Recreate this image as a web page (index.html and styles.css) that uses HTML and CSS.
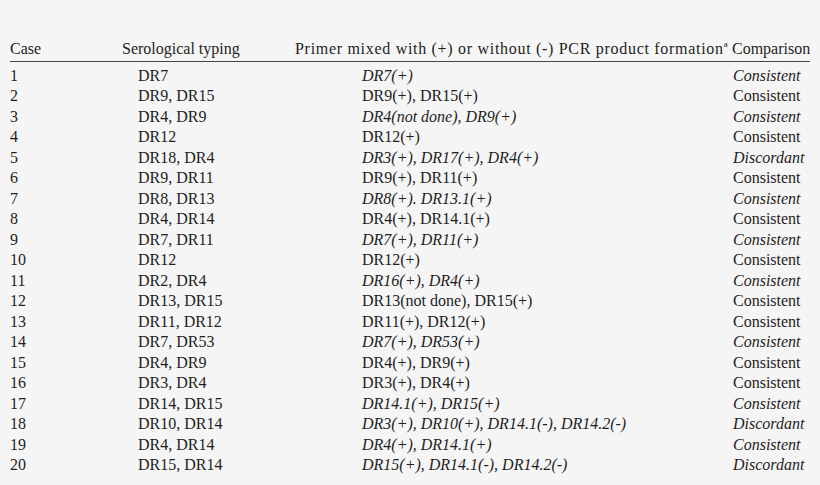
FILE: index.html
```html
<!DOCTYPE html>
<html>
<head>
<meta charset="utf-8">
<link rel="stylesheet" href="styles.css">
</head>
<body>
<div class="table">
  <div class="row head">
    <div class="c1">Case</div>
    <div class="c2">Serological typing</div>
    <div class="c3">Primer mixed with (+) or without (-) PCR product formation<sup>a</sup></div>
    <div class="c4">Comparison</div>
  </div>
  <div class="body">
    <div class="row it"><div class="c1">1</div><div class="c2">DR7</div><div class="c3">DR7(+)</div><div class="c4">Consistent</div></div>
    <div class="row"><div class="c1">2</div><div class="c2">DR9, DR15</div><div class="c3">DR9(+), DR15(+)</div><div class="c4">Consistent</div></div>
    <div class="row it"><div class="c1">3</div><div class="c2">DR4, DR9</div><div class="c3">DR4(not done), DR9(+)</div><div class="c4">Consistent</div></div>
    <div class="row"><div class="c1">4</div><div class="c2">DR12</div><div class="c3">DR12(+)</div><div class="c4">Consistent</div></div>
    <div class="row it"><div class="c1">5</div><div class="c2">DR18, DR4</div><div class="c3">DR3(+), DR17(+), DR4(+)</div><div class="c4">Discordant</div></div>
    <div class="row"><div class="c1">6</div><div class="c2">DR9, DR11</div><div class="c3">DR9(+), DR11(+)</div><div class="c4">Consistent</div></div>
    <div class="row it"><div class="c1">7</div><div class="c2">DR8, DR13</div><div class="c3">DR8(+). DR13.1(+)</div><div class="c4">Consistent</div></div>
    <div class="row"><div class="c1">8</div><div class="c2">DR4, DR14</div><div class="c3">DR4(+), DR14.1(+)</div><div class="c4">Consistent</div></div>
    <div class="row it"><div class="c1">9</div><div class="c2">DR7, DR11</div><div class="c3">DR7(+), DR11(+)</div><div class="c4">Consistent</div></div>
    <div class="row"><div class="c1">10</div><div class="c2">DR12</div><div class="c3">DR12(+)</div><div class="c4">Consistent</div></div>
    <div class="row it"><div class="c1">11</div><div class="c2">DR2, DR4</div><div class="c3">DR16(+), DR4(+)</div><div class="c4">Consistent</div></div>
    <div class="row"><div class="c1">12</div><div class="c2">DR13, DR15</div><div class="c3">DR13(not done), DR15(+)</div><div class="c4">Consistent</div></div>
    <div class="row"><div class="c1">13</div><div class="c2">DR11, DR12</div><div class="c3">DR11(+), DR12(+)</div><div class="c4">Consistent</div></div>
    <div class="row it"><div class="c1">14</div><div class="c2">DR7, DR53</div><div class="c3">DR7(+), DR53(+)</div><div class="c4">Consistent</div></div>
    <div class="row"><div class="c1">15</div><div class="c2">DR4, DR9</div><div class="c3">DR4(+), DR9(+)</div><div class="c4">Consistent</div></div>
    <div class="row"><div class="c1">16</div><div class="c2">DR3, DR4</div><div class="c3">DR3(+), DR4(+)</div><div class="c4">Consistent</div></div>
    <div class="row it"><div class="c1">17</div><div class="c2">DR14, DR15</div><div class="c3">DR14.1(+), DR15(+)</div><div class="c4">Consistent</div></div>
    <div class="row it"><div class="c1">18</div><div class="c2">DR10, DR14</div><div class="c3">DR3(+), DR10(+), DR14.1(-), DR14.2(-)</div><div class="c4">Discordant</div></div>
    <div class="row it"><div class="c1">19</div><div class="c2">DR4, DR14</div><div class="c3">DR4(+), DR14.1(+)</div><div class="c4">Consistent</div></div>
    <div class="row it"><div class="c1">20</div><div class="c2">DR15, DR14</div><div class="c3">DR15(+), DR14.1(-), DR14.2(-)</div><div class="c4">Discordant</div></div>
  </div>
</div>
</body>
</html>
```
FILE: styles.css
```css
html, body {
  margin: 0;
  padding: 0;
  background: #f5f5f5;
}
body {
  width: 820px;
  height: 485px;
  overflow: hidden;
  font-family: "Liberation Serif", "Times New Roman", serif;
  font-size: 16px;
  color: #1e1e1e;
}
.table {
  padding: 39px 10px 0 10px;
  width: 800px;
}
.row {
  display: grid;
  grid-template-columns: 112px 173px 437px 78px;
  line-height: 20.5px;
  white-space: nowrap;
}
.head {
  padding-bottom: 1px;
  border-bottom: 1.5px solid #444;
}
.head .c3 {
  letter-spacing: 0.7px;
}
.head sup {
  font-size: 9px;
  line-height: 0;
  vertical-align: 7px;
  letter-spacing: 0;
}
.body {
  padding-top: 4px;
}
.body .c2 {
  padding-left: 16px;
}
.body .c3 {
  padding-left: 67px;
}
.body .c4 {
  padding-left: 1px;
}
.it .c3, .it .c4 {
  font-style: italic;
}
```
